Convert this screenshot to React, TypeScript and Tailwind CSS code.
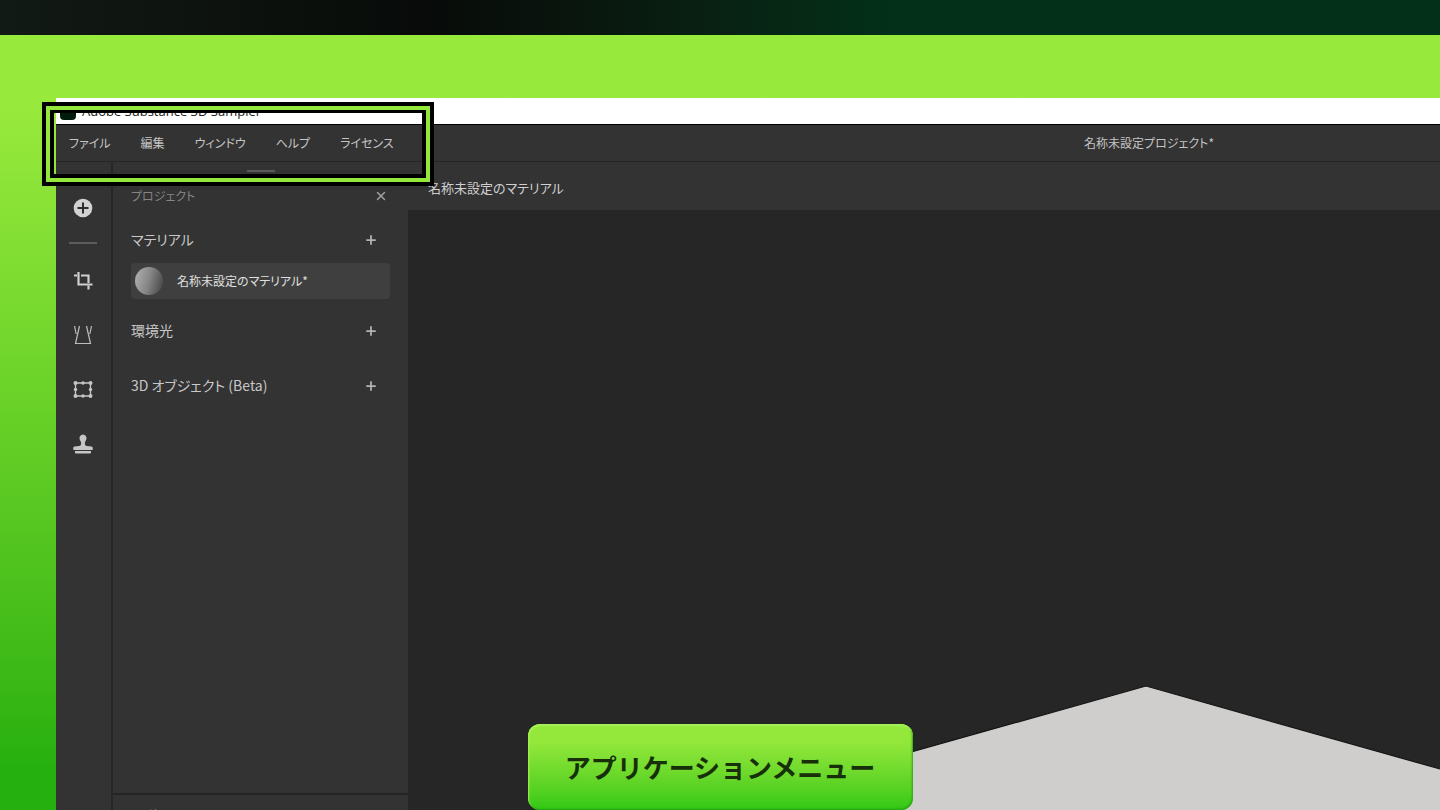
import React from 'react';
import { Plus, X } from 'lucide-react';

const menuItems = ['ファイル', '編集', 'ウィンドウ', 'ヘルプ', 'ライセンス'];

const AddCircleIcon = () => (
  <svg viewBox="0 0 20 20" className="h-5 w-5">
    <circle cx="10" cy="10" r="9.3" fill="#d2d2d2" />
    <path d="M10 4.500v11M4.500 10h11" stroke="#2c2c2c" strokeWidth="2" />
  </svg>
);

const CropIcon = () => (
  <svg viewBox="0 0 20 20" className="h-5 w-5" fill="none" stroke="#cfcfcf" strokeWidth="2.2">
    <path d="M5.500 1v12.500h14" />
    <path d="M1 4.500h3.200M8 4.500h7.500v7.500M15.500 14.500v4" />
  </svg>
);

const PerspectiveIcon = () => (
  <svg viewBox="0 0 20 20" className="h-5 w-5" fill="none" stroke="#bdbdbd" strokeWidth="1.2">
    <path d="M6.500 1L2.500 18.500h15L13.500 1" />
    <path d="M1.500 1l1.700 8M18.500 1l-1.700 8" />
  </svg>
);

const TransformIcon = () => (
  <svg viewBox="0 0 20 20" className="h-5 w-5" fill="#c6c6c6">
    <path d="M2.500 4h15v13h-15z" fill="none" stroke="#c6c6c6" strokeWidth="1.3" />
    <circle cx="2.5" cy="4" r="2" />
    <circle cx="10" cy="4" r="1.7" />
    <circle cx="17.5" cy="4" r="2" />
    <circle cx="2.5" cy="10.5" r="1.7" />
    <circle cx="17.5" cy="10.5" r="1.7" />
    <circle cx="2.5" cy="17" r="2" />
    <circle cx="10" cy="17" r="1.7" />
    <circle cx="17.5" cy="17" r="2" />
  </svg>
);

const StampIcon = () => (
  <svg viewBox="0 0 20 21" className="h-[21px] w-5" fill="#c6c6c6">
    <path d="M10 1.500a3.600 3.600 0 0 1 3.400 4.600c-.5 1.800-1.500 2.400-1.500 4.400 0 1.700.6 2.300 2 2.500l4.600.4c.8.1 1.200.7 1.200 1.500v2H.3v-2c0-.8.4-1.400 1.200-1.500l4.600-.4c1.400-.2 2-.8 2-2.500 0-2-1-2.600-1.500-4.400A3.600 3.600 0 0 1 10 1.500z" />
    <path d="M2 18h16v1.200c0 .8-.5 1.300-1.300 1.300H3.300c-.8 0-1.300-.5-1.300-1.300z" />
  </svg>
);

const tools = [
  { label: '切り抜き', Icon: CropIcon },
  { label: '遠近法', Icon: PerspectiveIcon },
  { label: '変形', Icon: TransformIcon },
  { label: 'スタンプ', Icon: StampIcon },
];

const SectionHeader = ({ title }: { title: string }) => (
  <div className="flex h-6 items-center justify-between pr-3">
    <h2 className="pb-0.5 text-sm text-[#c8c8c8]">{title}</h2>
    <button aria-label={`${title} +`} className="text-[#b4b4b4]">
      <Plus className="h-3.5 w-3.5" strokeWidth={3} />
    </button>
  </div>
);

const Toolbar = () => (
  <nav className="flex w-[57px] shrink-0 flex-col items-center border-r-2 border-[#272727] pt-9 pr-px">
    <button aria-label="追加">
      <AddCircleIcon />
    </button>
    <hr className="mt-6 w-7 border-t-2 border-[#5c5c5c]" />
    <div className="mt-[27px] flex flex-col gap-[34px]">
      {tools.map(({ label, Icon }) => (
        <button key={label} aria-label={label}>
          <Icon />
        </button>
      ))}
    </div>
  </nav>
);

const ProjectPanel = () => (
  <aside className="flex w-[295px] shrink-0 flex-col">
    <div className="mx-auto mt-2 h-0.5 w-7 bg-[#5a5a5a]" />
    <div className="flex flex-1 flex-col px-[18px] pt-3.5">
      <div className="flex h-5 items-center justify-between pr-0.5">
        <h1 className="text-xs text-[#858585]">プロジェクト</h1>
        <button aria-label="閉じる" className="text-[#a0a0a0]">
          <X className="h-3.5 w-3.5" strokeWidth={2.5} />
        </button>
      </div>
      <div className="mt-[22px]">
        <SectionHeader title="マテリアル" />
      </div>
      <button className="mt-[11px] flex h-9 items-center gap-3.5 rounded bg-[#3f3f3f] px-1 text-xs text-[#e0e0e0]">
        <span className="h-7 w-7 rounded-full bg-linear-105 from-[#b4b4b4] via-[#858585] to-[#404040]" />
        名称未設定のマテリアル*
      </button>
      <div className="mt-5 flex flex-col gap-[31px]">
        <SectionHeader title="環境光" />
        <SectionHeader title="3D オブジェクト (Beta)" />
      </div>
    </div>
    <div className="h-[17px] shrink-0 overflow-hidden border-t-2 border-[#252525] px-[18px] pt-[11px]">
      <h1 className="text-xs text-[#858585]">レイヤー</h1>
    </div>
  </aside>
);

const Viewport = () => (
  <section className="flex min-w-0 flex-1 flex-col bg-[#262626]">
    <div className="flex h-12 shrink-0 items-center bg-[#333333] pt-1 pl-5">
      <span className="text-[13px] text-[#d0d0d0]">名称未設定のマテリアル</span>
    </div>
    <div className="flex flex-1 items-end justify-end">
      <svg viewBox="0 0 600 130" className="w-[600px]">
        <path d="M0 92L306 6L600 89V130H0z" fill="#cfcecc" />
        <path d="M0 92L306 6L600 89" fill="none" stroke="#141414" strokeWidth="1.2" />
      </svg>
    </div>
  </section>
);

const SamplerWindow = () => (
  <div className="relative flex flex-1 flex-col bg-[#333333]">
    <div className="flex h-[26px] items-center gap-1.5 bg-white pt-0.5 pl-1 font-['Open_Sans',sans-serif] text-[13px] text-[#222222]">
      <span className="h-4 w-4 rounded-sm bg-[#001a0b]" />
      Adobe Substance 3D Sampler
    </div>
    <header className="flex h-[38px] items-center justify-between border-t border-b border-t-black border-b-[#262626] pr-[226px]">
      <nav className="flex gap-[30px] pl-[13px] text-xs text-[#c4c4c4]">
        {menuItems.map((item) => (
          <button key={item}>{item}</button>
        ))}
      </nav>
      <span className="text-xs text-[#c4c4c4]">名称未設定プロジェクト*</span>
    </header>
    <div className="flex flex-1">
      <Toolbar />
      <ProjectPanel />
      <Viewport />
    </div>

    {/* highlight around the application menu */}
    <div className="pointer-events-none absolute top-1 -left-3.5 h-[84px] w-[392px] border-4 border-black">
      <div className="h-full border-4 border-[#93e83b]">
        <div className="h-full border-4 border-t-3 border-black" />
      </div>
    </div>
  </div>
);

const App = () => (
  <div className="relative flex h-screen flex-col overflow-hidden font-['Noto_Sans_CJK_JP',sans-serif] [font-feature-settings:'palt']" lang="ja">
    <div className="h-[35px] shrink-0 bg-linear-to-r from-[#121a15] via-[#080b09] via-30% to-[#023018] to-62%" />
    <main className="flex flex-1 flex-col bg-linear-to-b from-[#97e93c] from-10% via-[#6cd329] via-45% to-[#25b00f] to-95% pt-[63px] pl-14">
      <SamplerWindow />
    </main>

    {/* caption */}
    <div className="absolute inset-x-0 bottom-0 flex justify-center">
      <p className="flex h-[86px] w-[385px] items-center justify-center rounded-xl bg-linear-to-b from-[#93e83b] from-20% to-[#2fc815] pb-0.5 text-[26px] font-bold text-[#17300a] shadow-[inset_1px_2px_2px_#a9f25a,inset_-1px_-1px_2px_#27a010] [font-feature-settings:normal]">
        アプリケーションメニュー
      </p>
    </div>
  </div>
);

export default App;
